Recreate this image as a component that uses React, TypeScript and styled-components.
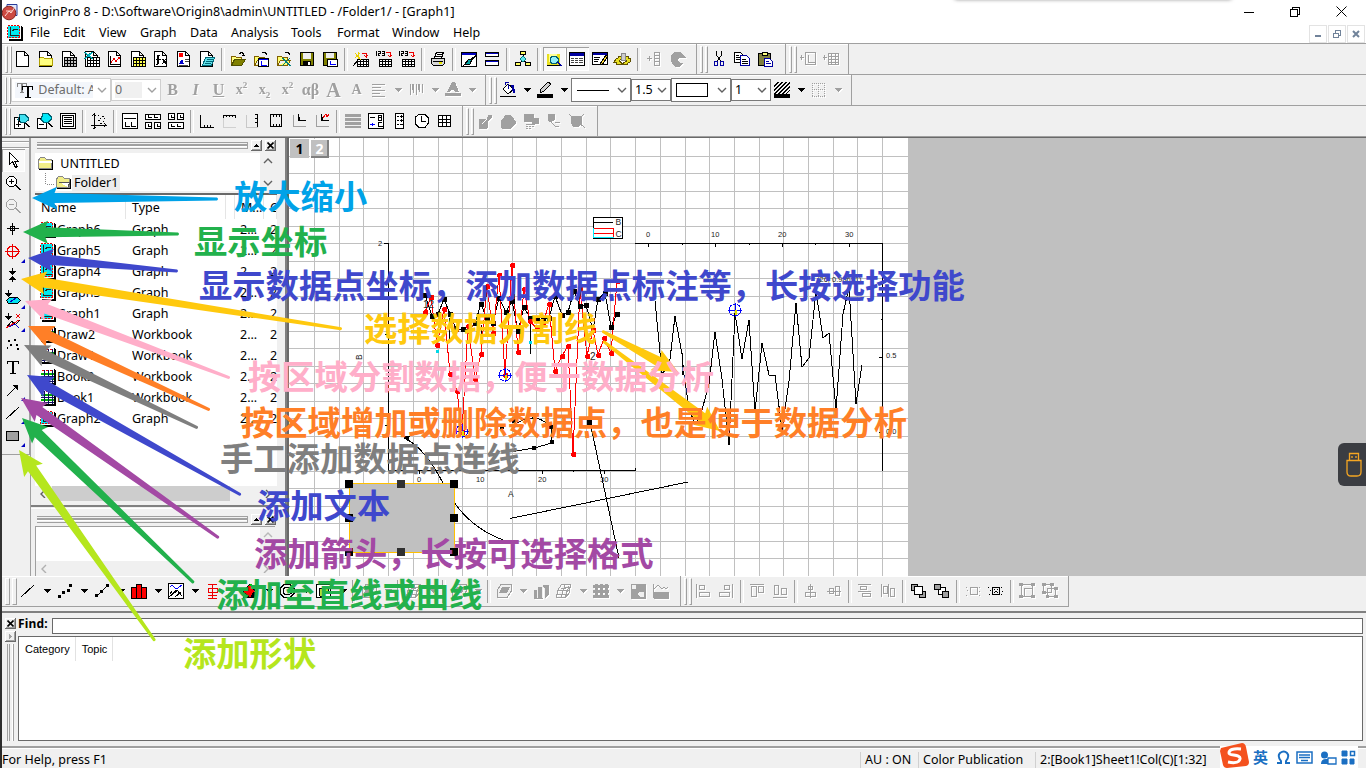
import React from 'react';
import styled, { createGlobalStyle, css } from 'styled-components';

const UI = '"Noto Sans", "Open Sans", sans-serif';

const Global = createGlobalStyle`
  body { margin: 0; background: #f0f0f0; overflow: hidden; }
  * { box-sizing: border-box; }
`;

/* ---------- frame ---------- */
const Screen = styled.div`
  position: relative; width: 1366px; height: 768px; overflow: hidden; display: flex;
  background: #f0f0f0; color: #000; font: 12.5px/16px ${UI}; white-space: pre;
`;
const DesktopEdge = styled.div`width: 2px; flex: none; background: linear-gradient(#26262b, #3c3c3c 30%, #2b2b2b);`;
const Window = styled.div`flex: 1; min-width: 0; display: flex; flex-direction: column;`;
const TitleBar = styled.div`height: 23px; flex: none; background: #fff; display: flex; align-items: center; padding-right: 2px;`;
const TitleText = styled.span`flex: 1; padding: 1px 0 0 4px; letter-spacing: 0.05px;`;
const WindowButton = styled.div`width: 46px; height: 20px; display: flex; align-items: center; justify-content: center;`;
const MenuBar = styled.div`height: 20px; flex: none; background: #fff; display: flex; align-items: center; padding-left: 5px;`;
const MenuItem = styled.span<{ $w: number }>`width: ${p => p.$w}px; flex: none;`;
const MdiButtons = styled.div`margin-left: auto; display: flex; gap: 1px; padding-right: 1px; align-self: flex-end;`;
const MdiButton = styled.div`width: 18px; height: 18px; border: 1px solid #e3e3e3; display: flex; align-items: center; justify-content: center;`;

/* ---------- toolbars ---------- */
const ToolRow = styled.div`height: 31px; flex: none; display: flex; border-top: 1px solid #a0a0a0; `;
const Bar = styled.div<{ $w: number; $closed?: boolean }>`
  width: ${p => p.$w}px; height: 30px; flex: none; display: flex; align-items: center; overflow: hidden;
  border-right: 1px solid #a0a0a0; box-shadow: inset 0 1px #fff;
  ${p => p.$closed && css`height: 31px; border-bottom: 1px solid #a0a0a0;`}
`;
const Grip = styled.div<{ $w?: number }>`
  width: ${p => p.$w ?? 10}px; height: 27px; flex: none; display: flex; gap: 2px; padding-left: 3px;
  &::before, &::after { content: ''; width: 3px; border: 1px solid; border-color: #fff #a0a0a0 #a0a0a0 #fff; }
`;
const Cell = styled.div<{ $w?: number; $off?: boolean; $on?: boolean }>`
  width: ${p => p.$w ?? 23}px; height: 24px; flex: none; display: flex; align-items: center; justify-content: center;
  ${p => p.$off && css`color: #a0a0a0; & > * { filter: drop-shadow(1px 1px 0 #fff); }`}
  ${p => p.$on && css`background: #f8f8f8; box-shadow: inset 1px 1px #a0a0a0, inset -1px -1px #fff;`}
`;
const Rule = styled.div`width: 8px; height: 23px; flex: none; display: flex; justify-content: center;
  &::before { content: ''; width: 2px; border-left: 1px solid #a0a0a0; border-right: 1px solid #fff; }`;
const Glyph = styled.span<{ $italic?: boolean; $line?: boolean; $size?: number }>`
  font: bold ${p => p.$size ?? 16}px/18px "Liberation Serif", serif;
  font-style: ${p => (p.$italic ? 'italic' : 'normal')}; text-decoration: ${p => (p.$line ? 'underline' : 'none')};
  sup, sub { font-size: 9px; line-height: 0; }
`;
const Combo = styled.div<{ $w: number; $h?: number; $off?: boolean }>`
  width: ${p => p.$w}px; height: ${p => p.$h ?? 24}px; flex: none; display: flex; align-items: center; background: #fff;
  border: 1px solid ${p => (p.$off ? '#cfcfcf' : '#7a7a7a')}; color: ${p => (p.$off ? '#6d6d6d' : '#000')};
  padding: 0 3px; justify-content: space-between;
`;
const ComboText = styled.span<{ $w: number; $tint?: string }>`
  width: ${p => p.$w}px; height: 16px; overflow: hidden; background: ${p => p.$tint ?? 'transparent'}; display: flex; align-items: center;
`;

const Svg = styled.svg`display: block; flex: none; overflow: visible; shape-rendering: crispEdges;`;
const IconSvg = styled(Svg)`margin-right: 1px;`;

type Shape = [d: string, stroke?: string, fill?: string];
const G = '#a0a0a0';
const page = 'M1.5.5h8l4 4v11h-12zM9.5.5v4h4';
const disk = 'M1.5 1.5h13v13h-13z';
const folder = 'M1.5 14.5v-9h4l1 1h5v3M1.5 14.5h10l3-5h-10z';

const icons: Record<string, Shape[]> = {
  blank: [[page, '#000', '#fff']],
  newFolder: [[page, '#000', '#fff'], ['M1.5 14.5v-7l1-1h3l1 1h8v7z', '#b0a000', '#ffff80']],
  sheet: [[page, '#000', '#fff'], ['M3.5 6.5h12v9h-12zM3 9.5h12M3 12.5h12M6.5 6v9M9.5 6v9M12.5 6v9', '#000', '#c0c0c0']],
  excel: [[page, '#000', '#fff'], ['M3.5 6.5h12v9h-12zM3 9.5h12M3 12.5h12M6.5 6v9M9.5 6v9M12.5 6v9', '#000', '#fff'], ['M0 1l8 7M8 1l-8 7', '#007878'], ['M1 1l8 7M9 1l-8 7', '#00b8c8']],
  plot: [[page, '#000', '#fff'], ['M3.5 5v8h10', '#000'], ['M4 12l3-5 2 4 3-5 1 2', '#e00']],
  matrix: [[page, '#000', '#fff'], ['M3.5 6.5h12v9h-12zM3 9.5h12M3 12.5h12M6.5 6v9M9.5 6v9M12.5 6v9', '#000', '#ffff50']],
  fn: [[page, '#000', '#fff'], ['M7 4.5h-2.5v9h-2M5.5 5v8M3 8.500h5M9 8l4 5M13 8l-4 5M10 8l4 5', '#000']],
  layout: [[page, '#000', '#fff'], ['M3 2h4v4h-4z', 'none', '#f00'], ['M3 13l3-5 2 5z', 'none', '#00c'], ['M9 8.5h4M9 10.5h4M3 14.5h9', '#444']],
  notes: [[page, '#000', '#fff'], ['M3.5 14.5l3-8h9l-3 8z', '#006878', '#60e0e8'], ['M8 8.500h6M7 10.5h6M6 12.500h6', '#006878']],
  open: [[folder, '#806000', '#ffff80'], ['M4.5 8.5h11l-4 6h-10z', '#505000', '#808000'], ['M9 3l3-2 2 3M12 4h3', '#000']],
  openT: [[folder, '#806000', '#ffff70'], ['M5.5 7.5h10v8h-10z', '#000', '#fff'], ['M6 8.5h9', '#00f'], ['M8 10v4h6', '#00f'], ['M9 2l3-1 2 3', '#000']],
  openX: [[folder, '#806000', '#ffff70'], ['M6 7l8 8M14 7l-8 8M7 7l8 8', '#008080'], ['M9 2l3-1 2 3', '#000']],
  save: [[disk, '#000', '#808000'], ['M4 2h8v6h-8z', 'none', '#eee'], ['M4 10h8v5h-8z', 'none', '#000'], ['M9 11h2v3h-2z', 'none', '#fff']],
  saveT: [[disk, '#000', '#808000'], ['M4 2h8v5h-8z', 'none', '#eee'], ['M5.5 8.5h10v7h-10z', '#000', '#fff'], ['M8 10v3.500h6', '#00f']],
  wizard: [['M4.5 8.5h11v7h-11zM4 10.5h11M4 13.500h11M7.5 9v6M10.500 9v6M13.5 9v6', '#000', '#fff'], ['M0 15l7-8', '#000'], ['M2 2l6 7M7 2l-5 5M5 1v7', '#ecd000'], ['M9 2.500h4.500v4M11 4l2 2 2-2', '#e00']],
  imp: [['M3.5 8.5h12v7h-12zM3 10.5h12M3 13.500h12M6.5 8v7M9.500 8v7M12.500 8v7', '#000', '#fff'], ['M.5 0v5M2 .5h2v2h-2v2h2M6 .5h2v4h-2M6 2.5h2', '#000'], ['M10 1.500h4.500v4M12 4l2 2 2-2', '#e00']],
  printer: [['M4.5 7l2-6h7l-2 6', '#000', '#fff'], ['M1.5 7.5h13v5l-2 2h-9l-2-2z', '#000', '#d8d8d8'], ['M3 10.5h10M7 3.5h5M6 5.5h5', '#000'], ['M9 11h3v2h-3z', 'none', '#e8e800']],
  dup: [['M.5 1.5h15v14h-15z', '#000', '#fff'], ['M1 2h14v2h-14z', 'none', '#0000c0'], ['M6 12l9-8M7 13l8-8', '#000'], ['M3 14l6-1 2-5h-3z', '#000', '#00a0a0']],
  tile: [['M1.500 1.5h13v4h-13zM1.500 9.5h13v5h-13z', '#000', '#fff'], ['M2 2h12v1h-12zM2 10h12v1h-12z', 'none', '#0000c0']],
  tree: [['M8 4v5M8 9l-4 4M8 9l5 4', '#000'], ['M5.5.5h5v3h-5zM.5 11.5h5v3h-5zM10.5 11.5h5v3h-5z', '#000', '#ffff60'], ['M8 5l3 3-3 3-3-3z', '#008080', '#60e8f0']],
  explorer: [['M1 3h13v11h-13z', 'none', '#e8e020'], ['M3 3h8v8h-8z', 'none', '#ffff90'], ['M1 14.500h14', '#000'], ['M6 5.500h4l2 2v3l-2 2h-4l-2-2v-3z', '#006070', '#90eef8'], ['M11 11l4 4M12 11l4 4', '#0000a0']],
  results: [['M.5 1.5h15v13h-15z', '#000', '#fff'], ['M1 2h14v3h-14z', 'none', '#0000a0'], ['M2 7.5h3M6 7.500h3M10 7.500h4M2 9.5h3M6 9.500h3M10 9.500h4M2 11.5h3M6 11.500h3M10 11.500h4', '#444']],
  script: [['M.5 1.5h15v12h-15z', '#000', '#fff'], ['M1 2h14v2h-14z', 'none', '#0000a0'], ['M2 6.5h6M2 8.5h5M2 10.500h4', '#000'], ['M8 13l6-9 2 1-6 9z', '#000', '#ffd830']],
  gear: [['M1 8l2-1 0-2 3 0 2-2 2 2 3 0 0 2 3 1-1 3-2 1-1 2-3-1-2 1-2-1-3 1-1-3-2 0z', '#605000', '#e8e020'], ['M5.500 8h5l1 2-3 2h-2l-2-2z', '#605000', '#fff'], ['M6 2h4v7h-4z', '#888', '#ccc']],
  addCol: [['M1 7.5h5M3.5 5v5M8.5 1.5h5v13h-5zM8 4.5h5M8 7.5h5M8 10.5h5', G]],
  cshape: [['M14 4l-3-3h-5l-4 4v5l4 5h5l3-3h-3l-3-3 3-3h5z', G, G]],
  cut: [['M5.500 0v4l4 6M10.500 0v4l-4 6', '#000'], ['M3.500 10.500h3v4h-3zM9.500 10.500h3v4h-3z', '#0000a0']],
  copy: [['M.5 1.5h6l3 3v7h-9z', '#000', '#fff'], ['M6.5 4.5h6l3 3v7h-9z', '#0000a0', '#fff'], ['M2 4.5h3M2 6.5h4M2 8.500h4M8 8.5h4M8 10.5h6M8 12.500h6', '#000']],
  paste: [['M1.5 2.5h12v12h-12z', '#000', '#808040'], ['M5 1.500h5v3h-5z', '#000', '#ffff80'], ['M7.5 7.5h5l3 3v5h-8z', '#0000a0', '#fff'], ['M9 10.5h3M9 12.5h5', '#0000a0']],
  addBox: [['M0 6.5h4M1.500 4v5M5.5 1.5h10v12h-10zM8.500 4v7h7', G]],
  addGrid: [['M0 6.5h4M1.500 4v5M5.5 2.5h10v11h-10zM5 5.5h10M5 8.5h10M5 11.5h10M8.5 2v11M12.5 2v11', G]],
  bucket: [['M3 7l5-5 6 5-6 5z', '#000', '#fff'], ['M8.500 2v5M5.500 3V.500h3', '#0000a0'], ['M11 3h3l1 8h-2z', 'none', '#0000a0'], ['M0 14.500h16', '#000']],
  pen: [['M3 10l1-3 7-7 3 2-7 7-4 2z', '#000', '#d0d0d0'], ['M0 12h16v4h-16z', 'none', '#000']],
  hatch: [['M0 4l4-4M0 8l8-8M0 12l12-12M4 12l12-12M8 12l8-8M12 12l4-4M0 5l5-5M0 9l9-9M1 12l12-12M5 12l11-11M9 12l7-7', '#000'], ['M0 12h16v4h-16z', 'none', '#000']],
  left: [['M1 2.5h13M1 5.5h9M1 8.5h13M1 11.5h8M1 14.5h13', G]],
  spread: [['M2.5 2v11M5.5 2v9M8.5 2v11M11.5 2v8M14.5 2v9M4.500 2v6M10.500 2v6', G]],
  colorA: [['M2 10l5-10h3l4 10h-4l-1-2h-3l-1 2z', 'none', G], ['M0 11h16v3h-16z', 'none', G]],
  zoomIn: [['M.5 4.5h10v11h-10z', '#000', '#fff'], ['M6 1.500h5l3 3v3l-3 2h-4l-3-3z', '#006070', '#40e0f0'], ['M11 10l4 4M12 10l4 4M4.500 8v6M2 11.5h5M5.500 4v5', '#000']],
  zoomOut: [['M.5 5.5h9v10h-9z', '#000', '#fff'], ['M6 .500h5l3 3v3l-3 3h-4l-3-3z', '#006070', '#00e8f8'], ['M11 10l4 4M12 10l4 4M2 11.5h5', '#000']],
  pageView: [['M.5.5h15v15h-15zM2.5 2.5h11v11h-11z', '#000', '#fff'], ['M4 4.5h8M4 6.5h8M4 8.5h8M4 10.5h8', '#000']],
  rescale: [['M3.5 0v16M0 12.5h16M1 3l2-2 2 2M13 10l2 2-2 2', '#000'], ['M7 2.500h1M11 3.500h2M9 5.500h1M13 5.500h1M7 7.500h2M12 8.500h1M9 10.500h2M5 14l-3 2', '#000']],
  panel1: [['M.5.5h15v15h-15z', '#000', '#fff'], ['M2 5.5h12M3.500 9v4h4M9.500 9v4h4', '#000']],
  panel4: [['M.5 1.5h15v5h-15zM.5 9.5h6v6h-6zM9.5 9.5h6v6h-6z', '#000', '#fff'], ['M3.500 2v2.500h3M9.500 2v2.500h3M3.500 11v2.500h2M12.500 11v2.500h2', '#000']],
  panel6: [['M.5.5h6v6h-6zM9.5.5h6v6h-6zM.5 9.5h15v6h-15z', '#000', '#fff'], ['M3.500 2v2.500h2M12.500 2v2.500h2M3.500 11v2.500h3M9.500 11v2.500h3', '#000']],
  axL: [['M1.5 2v12.500h13', '#000'], ['M5.500 12v2M8.500 12v2M11.500 12v2', '#000']],
  axT: [['M1 2.5h13M1.500 2v3M4.500 2v2M7.500 2v2M10.500 2v2M13.500 2v3', '#000'], ['M1.5 5v9.500h12', '#d0d0d0']],
  axR: [['M12.5 1v13M10 1.500h3M10 5.500h3M10 9.500h3', '#000'], ['M1.500 2v12.5h11', '#c8c8c8']],
  axB: [['M2.5 1.5h11v12h-11z', '#000'], ['M5.500 2v2M8.500 2v2M11.500 2v2M5.500 11v2M8.500 11v2M11.500 11v2', '#000']],
  inset: [['M2.5 2v11.500h12', G], ['M7.5 1v6h7M8.500 4v3', '#000']],
  insetR: [['M2.5 2v11.500h12', G], ['M7.5 1v6h7M8.500 4v3', '#000'], ['M9 5l3-4 1 3 2-3', '#e00']],
  bars3: [['M0 1h16v3h-16zM0 5h16v3h-16zM0 9h16v3h-16zM0 13h16v2h-16z', 'none', G]],
  legend: [['M.5.5h15v15h-15z', '#000', '#fff'], ['M2 4.5h5M10.500 2v5h3v-5h-3M10 4.5h3M14 9.5h-3.500v4h4', '#000'], ['M2 11.5h5M4.5 10v3', '#00f']],
  colorScale: [['M4.5.5h8v15h-8z', '#000', '#fff'], ['M6 3.500h2M6 7.500h2M6 11.500h2M10.500 2v3M9 3.500h3M10.500 6v3M9 7.500h3M9 11.500h3', '#000']],
  clock: [['M5 1.5h6l3 3v6l-3 4h-6l-4-4v-6z', '#000', '#fff'], ['M7.500 3v5.500h4', '#000']],
  table: [['M1.5 2.5h12v11h-12zM1 6.5h12M1 9.5h12M5.5 2v11M9.5 2v11', '#000', '#fff']],
  m1: [['M2 6h8l2-4h2v3l-3 3-1 7h-8z', G, G], ['M5 11l5-5', '#fff']],
  m2: [['M1 9l5-7h4l5 6v3l-4 4h-9z', G, G]],
  m3: [['M1 1h9v7h-9zM9 5h6v5h-6z', G, G], ['M3 11.500h9M3 13.500h2M6 13.500h2M9 13.500h2M3 15.500h2M6 15.500h2', G]],
  m4: [['M3 1h5v6l-2 1h-3l-1-2zM5 9l5 5', G, G], ['M9 9.500h5M9 13.500h4', G]],
  m5: [['M3 3h9v8l-2 2h-6l-2-4zM0 1l16 14M15 1l-6 6', G, G]],
  arrow: [['M4.5.5v12l3-3 3 6 2-1-3-5h4z', '#000', '#fff']],
  magPlus: [['M4.500 1.5h4l3 3v4l-3 3h-4l-3-3v-4z', '#000', '#fff'], ['M6.500 4v5M4 6.5h5M10 10l5 5M11 10l5 5', '#000']],
  magMinus: [['M4.500 1.5h4l3 3v4l-3 3h-4l-3-3v-4zM4 6.5h5M10 10l5 5M11 10l5 5', G]],
  cross: [['M7.5 2v12M2 7.5h12M5.5 5.5h4v4h-4z', '#000']],
  target: [['M5 2.500h5l3 3v4l-3 3h-5l-3-3v-4zM7.5 0v15M0 7.5h15', '#e00']],
  range: [['M7.500 1v4M7.500 15v-4', '#000'], ['M4 4h7l-3.500 4zM4 13h7l-3.500-4z', 'none', '#000']],
  region: [['M3.500 0v4', '#000'], ['M0 3h7l-3.500 4z', 'none', '#000'], ['M1.5 10.5l3-3h8l3 3-3 3h-9z', '#000', '#00e0f0'], ['M5 12l6-4', '#0000c0']],
  mask: [['M3.500 0v4M1 15l6-7 3 4 5-5', '#000'], ['M0 3h7l-3.500 4z', 'none', '#000'], ['M11 1l4 4M15 1l-4 4M1 15l13-8', '#e00'], ['M4 14l6-3 4 4', '#00c']],
  dots: [['M3 4h2v2h-2zM9 3h2v2h-2zM5 8h2v2h-2zM11 8h2v2h-2zM2 11h1v2h-1zM12 12h2v2h-2z', 'none', '#000']],
  bigT: [['M2.5 5v-2.500h11v2.500M8.500 2v12M7.500 2v12M5 14.5h6', '#000']],
  diag: [['M2 14l9-9', '#000'], ['M7 3h6v6z', 'none', '#000']],
  line: [['M1 14l13-12', '#000']],
  rect: [['M1.5 3.5h12v9h-12z', '#000', G]],
  scat: [['M1 12h3v3h-3zM5 8h3v3h-3zM10 6h3v3h-3zM12 1h3v3h-3z', 'none', '#000']],
  lscat: [['M3 13l11-11', '#000'], ['M1 11h3v3h-3zM6 7h3v3h-3zM12 1h3v3h-3z', 'none', '#000']],
  hist: [['M.5 15.5v-11h5v11zM5.5 15.5v-14h5v14zM10.5 15.5v-11h5v11z', '#000', '#f00']],
  area: [['M.5.5h15v15h-15z', '#000', '#fff'], ['M1 14l6-6 2-1 5 6M2 11l2-3M7 14l6-5M1 14l8-6', '#000'], ['M2 4l2-2 3 3 3 0 4-3', '#00f']],
  box: [['M3 1.5h9M7.5 1v14M3 5.5h9v4h-9zM3 12.5h9M3 15.5h9', '#e00']],
  surf: [['M8 1l6 8-6 6-7-6z', '#000', '#f00'], ['M1 9l4 3 3 3h-7zM11 9h4v6h-7z', 'none', '#000'], ['M6 3l3-3 3 4z', 'none', '#0c0']],
  polar: [['M5 1.5h6l4 4v5l-4 4h-6l-4-4v-5zM6 4.5h4l2 2v4l-2 1h-4l-2-2v-3z', '#000']],
  contour: [['M.5 1.5h14v13h-14z', '#000', '#fff'], ['M3 5h9v3l-5 5h-3z', '#000', '#b0e030']],
  slab: [['M5 1.5h10v7l-4 6h-10v-7z', G, '#f0f0f0'], ['M6 4h8l-3 6h-8z', 'none', G]],
  bars3d: [['M1 7h3v8h-3zM5 4h4v11h-4zM10 2h5v10l-3 3v-10z', G, G], ['M4.500 6v9M9.500 4v11', '#f0f0f0']],
  wire: [['M5.5 1.5h9l-1 8-4 5h-9l1-7zM2 7h11M1 11h11M9 2l-4 12M13 3l-4 11M5 6l9-2', G]],
  mesh: [['M2 1h3v14h-3zM7 1h3v14h-3zM12 1h3v14h-3zM0 2h16v3h-16zM0 7h16v3h-16zM0 12h16v3h-16z', 'none', G]],
  image: [['M1 1h14v14h-14z', G, G], ['M2 2h4v4h-4zM10 9h4v5h-3l-4-3z', 'none', '#f0f0f0']],
  profile: [['M1 9h14v6h-14z', G, G], ['M1 6l4-4 4 4 2-2 2 2 2-2M.5 1v14', G]],
  alL: [['M1.5 1v14M4.5 2.5h5v4h-5zM4.5 9.5h10v4h-10z', G]],
  alR: [['M14.5 1v14M6.5 2.5h5v4h-5zM1.5 9.5h10v4h-10z', G]],
  alT: [['M1 1.5h14M2.5 3.5h5v10h-5zM9.5 3.5h5v6h-5z', G]],
  alB: [['M1 14.5h14M2.5 2.5h4v9h-4zM9.5 5.5h5v6h-5z', G]],
  alH: [['M7.500 1v14M5.5 3.5h4v3h-4zM2.5 9.5h10v4h-10z', G]],
  alV: [['M1 8.500h14M3.5 5.5h4v5h-4zM9.5 3.5h4v9h-4z', G]],
  dV: [['M1 1.5h13M3.5 3.5h6v3h-6zM5.5 10.5h8v3h-8zM1 8.5h13', G]],
  dH: [['M1.5 1v13M8.5 1v13M3.5 3.5h4v7h-4zM10.5 5.5h4v8h-4z', G]],
  front: [['M.5 1.5h6v6h-6zM8.5 8.5h6v6h-6z', '#000', G], ['M3.5 3.5h8v8h-8z', '#000', '#fff']],
  back: [['M4.5 4.5h7v7h-7z', '#000', '#fff'], ['M.5 1.500h6v5h-6zM8.5 8.5h6v6h-6z', '#000', G]],
  fit: [['M5.5 4.5h7v7h-7zM1 4.500h1M2 7.500h1M1 12.500h1M14 4.500h1M14 8.500h1M14 12.500h1', G]],
  fitB: [['M4.5 4.5h7v7h-7zM0 4.500h1M2 7.500h1M1 11.500h1M13 4.500h1M14 8.500h1M13 11.500h1M6 6.500h1M9 6.500h1M7 8.500h2M6 9.500h1M9 9.500h1', '#000']],
  group: [['M2.5 1.5h11v12h-11zM5.5 5.5h8v8h-8z', G], ['M0 0h4v3h-4zM12 0h4v3h-4zM0 12h4v3h-4zM12 12h4v3h-4z', 'none', G]],
  ungroup: [['M1.5 1.5h8v8h-8zM5.5 5.5h8v8h-8z', G], ['M0 0h4v3h-4zM8 0h4v3h-4zM0 8h4v3h-4zM12 4h4v3h-4zM12 12h4v3h-4zM4 12h3v3h-3z', 'none', G]],
  borders: [['M1.500 1v14M13.500 1v14M1 1.500h13M1 14.500h13M7.500 1v14M1 7.500h13', G]],
  tt: [['M.5 5v-3.500h9v3.500M4.500 1v10M5.500 1v10M3 10.500h4', '#888'], ['M5.500 8v-3.500h10v3.500M10.500 4v11M11.500 4v11M8 15.500h6', '#000']],
};

function Icon({ name }: { name: string }) {
  return (
    <IconSvg width={16} height={16} viewBox="0 0 16 16" strokeDasharray={name === 'borders' ? '1 1' : undefined}>
      {(icons[name] ?? []).map(([d, s = '#000', f = 'none'], i) => <path key={i} d={d} stroke={s} fill={f} />)}
    </IconSvg>
  );
}
const Drop = ({ off }: { off?: boolean }) => (
  <Cell $w={14} $off={off}><Svg width="8" height="4"><path d="M0 0h8l-4 4z" fill={off ? G : '#000'} /></Svg></Cell>
);
const Chevron = ({ dir = 'down', c = '#606060' }: { dir?: string; c?: string }) => {
  const d: Record<string, string> = { down: 'M1 2l4 4 4-4', up: 'M1 7l4-4 4 4', left: 'M6 1l-4 4 4 4', right: 'M3 1l4 4-4 4' };
  return <svg width="10" height="9" viewBox="0 0 10 9"><path d={d[dir]} fill="none" stroke={c} strokeWidth="1.4" /></svg>;
};

/* Renders a compact toolbar spec: "|" is a rule, "v" a menu arrow, "~" marks a disabled icon, "!" a pressed one. */
function Tools({ spec }: { spec: string }) {
  return <>{spec.split(' ').map((t, i) => {
    if (t === '|') return <Rule key={i} />;
    if (t === 'v' || t === '~v') return <Drop key={i} off={t === '~v'} />;
    const off = t[0] === '~', on = t[0] === '!';
    return <Cell key={i} $off={off} $on={on}><Icon name={off || on ? t.slice(1) : t} /></Cell>;
  })}</>;
}

/* ---------- workspace ---------- */
const Workspace = styled.div`height: 440px; flex: none; display: flex; border-top: 1px solid #a0a0a0; box-shadow: inset 0 1px #696969; padding-top: 1px;`;
const Toolbox = styled.div`
  width: 28px; height: 317px; flex: none; display: flex; flex-direction: column; border-right: 1px solid #a0a0a0; border-bottom: 1px solid #a0a0a0;
  padding-top: 3px;
`;
const HGrip = styled.div`height: 7px; flex: none; margin-bottom: 1px; border: solid #a0a0a0; border-width: 1px 0; box-shadow: 0 1px #fff, inset 0 1px #fff;`;
const ToolSlot = styled.div<{ $on?: boolean }>`
  height: 23px; width: 23px; padding-bottom: 1px; flex: none; display: flex; align-items: center; justify-content: center; position: relative;
  ${p => p.$on && css`background: #fafafa; box-shadow: inset 1px 1px #a0a0a0, inset -1px -1px #fff;`}
`;
const Flyout = styled.i`position: absolute; right: 0; bottom: 1px; border: 2px solid; border-color: transparent #0000c0 #0000c0 transparent;`;
const Side = styled.div`width: 257px; flex: none; display: flex; flex-direction: column; border-left: 1px solid #a0a0a0; padding: 1px 2px 0 4px; border-right: 2px solid #808080; `;
const Caption = styled.div`height: 13px; flex: none; display: flex; align-items: center; gap: 3px; padding-left: 2px;`;
const CaptionLines = styled.div`flex: 1; height: 7px; max-width: 211px; border: solid #a0a0a0; border-width: 1px 1px 1px 0; display: flex; align-items: center;
  &::before { content: ''; width: 100%; height: 2px; background: #a0a0a0; border-bottom: 1px solid #fff; }`;
const TinyButton = styled.div`
  width: 11px; height: 11px; flex: none; display: flex; align-items: center; justify-content: center; background: #f0f0f0;
  box-shadow: inset -1px -1px #696969, inset 1px 1px #fff, inset -2px -2px #a0a0a0;
`;
const Tree = styled.div`width: 240px; height: 38px; flex: none; background: #fff; margin-top: 1px; display: flex; justify-content: space-between; `;
const TreeItems = styled.div`padding-left: 3px; display: flex; flex-direction: column;`;
const TreeItem = styled.div<{ $in?: number }>`height: 20px; padding-left: ${p => p.$in ?? 0}px; display: flex; align-items: center; gap: ${p => (p.$in ? 2 : 4)}px; padding-top: 2px;`;
const Selected = styled.span`background: #ececec; padding: 0 2px; margin-left: -1px;`;
const VScroll = styled.div`width: 15px; background: #f0f0f0; display: flex; flex-direction: column; align-items: center; justify-content: space-between; padding: 3px 0;`;
const List = styled.div`
  width: 242px; height: 308px; flex: none; margin-top: 2px; background: #fff; border-top: 2px solid #696969; display: flex; flex-direction: column;
`;
const ListHead = styled.div`height: 24px; display: flex; align-items: center; span { height: 24px; line-height: 25px; border-right: 1px solid #e5e5e5; padding-left: 6px; overflow: hidden; }`;
const ListRow = styled.div`height: 21px; display: flex; align-items: center; padding-left: 5px;`;
const Col = styled.span<{ $w: number }>`width: ${p => p.$w}px; flex: none; overflow: hidden;`;
const RowIcon = styled.span`width: 17px; flex: none;`;
const HScroll = styled.div`height: 15px; margin-top: auto; background: #f0f0f0; display: flex; align-items: center; justify-content: space-between; padding: 0 4px;`;
const Thumb = styled.div`width: 178px; height: 15px; background: #cdcdcd; margin-right: auto; margin-left: 3px;`;
const SideSplit = styled.div`height: 4px; flex: none; margin: 4px -2px 4px -4px; border-top: 2px solid #808080; border-bottom: 1px solid #fff;`;
const Memo = styled.div`flex: 1; margin-right: 8px; background: #fff; border: solid #a0a0a0; border-width: 1px 0 0 1px; display: flex; flex-direction: column;`;
const MemoScroll = styled(VScroll)`align-self: flex-end; height: 31px;`;
const GraphArea = styled.div`flex: 1; background: #c0c0c0; border-left: 2px solid #696969;`;
const Canvas = styled.div`width: 619px; height: 438px; background: #fff; position: relative;`;
const LayerTabs = styled.div`position: absolute; left: 1px; top: 1px; display: flex; gap: 1px; font-weight: bold; font-size: 14px;`;
const LayerTab = styled.div<{ $dim?: boolean }>`
  width: 19px; height: 19px; background: #c0c0c0; text-align: center; line-height: 19px; color: ${p => (p.$dim ? '#fff' : '#000')};
  ${p => p.$dim && css`box-shadow: inset 1px 1px #fff, inset -2px -2px #808080;`}
`;

const listing: [string, string][] = [
  ['Graph6', 'Graph'], ['Graph5', 'Graph'], ['Graph4', 'Graph'], ['Graph3', 'Graph'], ['Graph1', 'Graph'],
  ['Draw2', 'Workbook'], ['Draw1', 'Workbook'], ['Book2', 'Workbook'], ['Book1', 'Workbook'], ['Graph2', 'Graph'],
];
const GraphIcon = () => (
  <Svg width="16" height="16" viewBox="0 0 16 16">
    <path d="M2 14.500h12.500v-13.500M2 15.500h13.500v-14" stroke="#000" fill="none" />
    <path d="M.5.5h12v12h-12z" fill="#00e8f0" stroke="#e00" strokeDasharray="2 1" />
    <path d="M3.500 2v8.500h8M5 6l3-2 3 1" stroke="#222" fill="none" />
  </Svg>
);
const BookIcon = () => (
  <Svg width="16" height="16" viewBox="0 0 16 16">
    <path d="M0 0h14v14h-14z" fill="#fff" /><path d="M1 5h13M1 10h13" stroke="#00b000" strokeWidth="2" />
    <path d="M4.500 1v13M8.500 1v13M12.500 1v13M1 7.500h13M1 12.500h13" stroke="#101060" /><path d="M2 1.500h2M6 1.500h2M10 1.500h2" stroke="#e00" />
    <path d="M14.500 0v14.500H1M15.500 1v14.500H2" stroke="#000" fill="none" />
  </Svg>
);
const FolderIcon = ({ open }: { open?: boolean }) => (
  <Svg width="15" height="13" viewBox="0 0 15 13">
    <path d="M.5 11.500V3l2-2.500h4l2 2h5v9z" fill="#f2ee88" stroke="#888" /><path d="M14.500 3v9.500H1" stroke="#000" fill="none" />
    <path d={open ? 'M3 6h11l-2 5' : 'M1 4h12v1H1z'} stroke={open ? '#555' : '#fff'} fill="#fff" />
  </Svg>
);

/* ---------- chart ---------- */
const blackPts: number[][] = [[425, 295], [432, 316], [438, 314], [444, 299], [450, 314], [456, 329], [463, 329], [469, 330], [475, 323], [481, 304], [487, 319], [493, 323], [499, 298], [506, 312], [512, 301], [518, 331], [524, 307], [530, 318], [537, 319], [543, 319], [549, 318], [555, 296], [562, 315], [568, 312], [574, 291], [580, 306], [586, 305], [593, 330], [598, 299], [605, 293], [611, 327], [617, 314]];
const redPts: number[][] = [[425, 312], [431, 297], [437, 345], [444, 309], [450, 374], [457, 391], [462, 432], [468, 326], [475, 379], [481, 354], [487, 286], [493, 333], [499, 275], [505, 375], [512, 265], [518, 352], [524, 289], [530, 321], [537, 329], [543, 323], [549, 304], [555, 371], [562, 356], [568, 346], [573, 454], [580, 289], [587, 356], [593, 330], [598, 355], [604, 338], [611, 353], [617, 281]];
const rightPts = '655,301 662,373 669,368 675,316 682,354 684,375 689,408 695,425 702,410 709,384 715,332 722,379 729,445 735,313 742,359 749,320 755,412 762,343 769,375 775,375 782,430 789,381 796,303 802,367 809,358 816,291 823,338 829,333 836,410 843,314 849,287 856,404 862,365';

const Chart = () => (
  <Svg width="619" height="438" viewBox="289 138 619 438" fontFamily='"Liberation Sans", sans-serif' fontSize="7.500" fill="#222">
    <g stroke="#c0c0c0">
      {Array.from({ length: 24 }, (_, i) => <path key={'v' + i} d={`M${Math.round(314 + i * 24.7)}.5 138v438`} />)}
      {Array.from({ length: 24 }, (_, i) => <path key={'h' + i} d={`M289 ${Math.round(156 + i * 17.480)}.5h619`} />)}
    </g>
    <g stroke="#000" fill="none">
      <path d="M384 243.500h4.500v227h247v-3M419.500 470v4M450.500 470v2M481.500 470v4M511.500 470v2M542.500 470v4M573.500 470v2M604.500 470v4M385 334.500h4M385 425.500h4" />
      <path d="M635 243.500h247.500v227M648.500 243v4M682.500 243v2M715.500 243v4M749.500 243v2M782.500 243v4M815.500 243v2M849.500 243v4M879 357.500h4M881 319.500h2M879 432.500h4" />
      <polyline points={blackPts.map(p => p.join()).join(' ')} />
      <polyline points={rightPts} />
      <path d="M404 438Q425 447 445 487T506 541M510 518.500L688 482M590 422L619 558M511 427Q534 409 551 427L552 443 534 448 510 452" />
      <path d="M530 318v36M481 325v18M449 318v25M682 353v22" />
    </g>
    <polyline points={redPts.map(p => p.join()).join(' ')} stroke="#f00" fill="none" />
    {blackPts.map(([x, y]) => <path key={x} d={`M${x - 2} ${y - 2}h5v5h-5z`} fill="#000" />)}
    {redPts.map(([x, y]) => <path key={x} d={`M${x - 1} ${y - 2}h3l1 1v3l-1 1h-3l-1-1v-3z`} fill="#f00" />)}
    <path d="M549 425h4v4h-4zM550 440h4v4h-4zM532 446h4v4h-4zM500 425h4v4h-4zM402 436l8 0-2 6zM587 420h5v5h-5zM512 419h4v4h-4z" fill="#000" />
    <g stroke="#00f" fill="none">
      {[[505, 375], [462, 431], [735, 310]].map(([x, y]) => (
        <g key={x}><circle cx={x} cy={y} r="6" strokeDasharray="4 1" /><path d={`M${x - 7} ${y + .5}h14M${x}.5 ${y - 7}v14`} /><path d={`M${x}.5 ${y}v5`} stroke="#dd0" strokeWidth="2" /></g>
      ))}
    </g>
    <path d="M436 350h3v3h-3zM529 341h3v3h-3zM587 370h3v3h-3z" fill="#00d8e8" />
    <path d="M593.500 217.500h29v21h-29z" fill="#fff" stroke="#000" />
    <path d="M594 222.500h19" stroke="#000" /><path d="M594 228.500h19.500v9M594 233.500h19" stroke="#f00" fill="none" /><path d="M593.500 228v9.500h20" stroke="#0ef" fill="none" />
    <g fontSize="8.500"><text x="615.500" y="225">B</text><text x="615.500" y="236.500">C</text></g>
    <text x="378" y="246">2</text><text x="417" y="482">0</text><text x="476" y="482">10</text><text x="538" y="482">20</text><text x="600" y="482">30</text>
    <text x="646" y="237">0</text><text x="711" y="237">10</text><text x="778" y="237">20</text><text x="845" y="237">30</text>
    <text x="886" y="358">0.5</text><text x="886" y="434">0.0</text><text x="817" y="282">(26, 0.98691)</text><text x="508" y="497" fontSize="8.500">A</text>
    <text x="362" y="360" fontSize="8.500" transform="rotate(-90 362 360)">B</text>
    <text x="423" y="308" fontSize="10">12</text><text x="590" y="360" fontSize="10">2</text>
    <path d="M349 483.500h105v69h-105z" fill="#c0c0c0" stroke="#ffc000" />
    {[349, 401, 454].map(x => [484, 518, 552].map(y => !(x === 401 && y === 518) && <path key={x + '-' + y} d={`M${x - 4} ${y - 4}h8v8h-8z`} fill={x === 401 ? '#303030' : '#000'} />))}
  </Svg>
);

/* ---------- footer ---------- */
const BottomTools = styled.div`height: 35px; flex: none; display: flex; align-items: flex-start;`;
const FindPane = styled.div`height: 137px; flex: none; border-top: 2px solid #808080; border-bottom: 2px solid #a0a0a0; display: flex; padding: 5px 3px 5px 3px; gap: 2px;`;
const PaneEdge = styled.div`width: 11px; flex: none; display: flex; flex-direction: column; gap: 2px;`;
const VGrip = styled.div`flex: 1; margin-left: 2px; width: 7px; border: solid #a0a0a0; border-width: 0 1px; display: flex; justify-content: center; &::before { content: ''; width: 2px; border-left: 1px solid #a0a0a0; border-right: 1px solid #fff; }`;
const FindBody = styled.div`flex: 1; display: flex; flex-direction: column; gap: 3px;`;
const FindLine = styled.div`display: flex; align-items: center; height: 15px; font-weight: bold; font-size: 12px; letter-spacing: 0.2px; span { width: 34px; padding-bottom: 3px; }`;
const FindInput = styled.div`flex: 1; height: 16px; background: #fff; border: 1px solid #696969;`;
const Results = styled.div`flex: 1; background: #fff; border: 1px solid #696969; display: flex; font: 11px/24px "Liberation Sans", sans-serif; span { height: 24px; border-right: 1px solid #e2e2e2; padding: 0 5px 0 6px; }`;
const Status = styled.div`flex: 1; display: flex; align-items: center; border-top: 1px solid #fff; padding-top: 3px;`;
const StatusPart = styled.span<{ $w?: number }>`${p => (p.$w ? `width: ${p.$w}px;` : 'flex: 1;')} border-left: ${p => (p.$w ? '1px solid #d0d0d0' : 'none')}; padding-left: ${p => (p.$w ? 4 : 0)}px;`;
const ImeBar = styled.div`position: absolute; left: 1220px; top: 743px; width: 138px; height: 25px; display: flex; align-items: center; background: linear-gradient(transparent 3px, #fff 3px); color: #1b6fc2; font: bold 15px/20px "Noto Sans CJK SC", sans-serif;`;
const Shade = styled.div`position: absolute; left: 955px; top: -7px; width: 276px; height: 6px; box-shadow: 0 0 4px rgba(0,0,0,.6);`;
const UsbTab = styled.div`position: absolute; left: 1338px; top: 443px; width: 34px; height: 43px; border-radius: 6px; background: #3b3d42; display: flex; align-items: center; padding-left: 8px;`;

/* ---------- annotations ---------- */
const Notes = styled.svg`position: absolute; left: 0; top: 0;`;
const Note = styled.span<{ $x: number; $y: number; $c: string }>`
  position: absolute; left: ${p => p.$x}px; top: ${p => p.$y - 22}px; color: ${p => p.$c};
  font: bold 33.300px/40px "Noto Sans CJK SC", sans-serif;
`;
const arrows: [number, number, number, number, string][] = [
  [32, 198, 218, 199, '#00a2e8'], [23, 232, 179, 234, '#22b14c'], [28, 258, 178, 271, '#3f48cc'], [21, 279, 342, 329, '#ffc90e'],
  [25, 301, 230, 378, '#ffaec9'], [28, 326, 210, 410, '#ff7f27'], [24, 345, 198, 428, '#7f7f7f'], [27, 375, 241, 495, '#3f48cc'],
  [21, 398, 219, 538, '#a349a4'], [22, 418, 194, 583, '#22b14c'], [19, 450, 155, 641, '#b5e61d'],
  [678, 372, 602, 331, '#ffc90e'], [720, 431, 603, 341, '#ffc90e'],
];
const notes: [string, number, number, string][] = [
  ['放大缩小', 234, 197, '#00a2e8'], ['显示坐标', 194, 242, '#22b14c'], ['显示数据点坐标，添加数据点标注等，长按选择功能', 199, 286, '#3f48cc'],
  ['选择数据分割线', 364, 329, '#ffc90e'], ['按区域分割数据，便于数据分析', 248, 377, '#ffaec9'], ['按区域增加或删除数据点，也是便于数据分析', 241, 423, '#ff7f27'],
  ['手工添加数据点连线', 220, 459, '#7f7f7f'], ['添加文本', 257, 506, '#3f48cc'], ['添加箭头，长按可选择格式', 254, 554, '#a349a4'],
  ['添加至直线或曲线', 216, 595, '#22b14c'], ['添加形状', 183, 654, '#b5e61d'],
];
function Taper({ a: [hx, hy, tx, ty, c] }: { a: [number, number, number, number, string] }) {
  const len = Math.hypot(tx - hx, ty - hy);
  const angle = (Math.atan2(ty - hy, tx - hx) * 180) / Math.PI;
  return <path fill={c} transform={`translate(${hx} ${hy}) rotate(${angle})`}
    d={`M0 0L25 -11.500 22.500 -5 ${len - 1} -1.500Q${len + 1} 0 ${len - 1} 1.500L22.500 5 25 11.500Z`} />;
}

const MENU: [string, number][] = [['File', 33], ['Edit', 36], ['View', 41], ['Graph', 50], ['Data', 41], ['Analysis', 60], ['Tools', 46], ['Format', 55], ['Window', 61], ['Help', 40]];
const toolbox = 'arrow magPlus magMinus cross target range region mask dots bigT diag line rect'.split(' ');
const flyouts = new Set(['target', 'region', 'mask', 'diag', 'line', 'rect']);
const UpMark = () => <Svg width="5" height="3"><path d="M0 3h5l-2.500-3z" fill="#000" /></Svg>;
const CloseMark = () => <svg width="7" height="7"><path d="M.5.5l6 6M6.500.5l-6 6" stroke="#000" strokeWidth="1.600" /></svg>;

function SideCaption() {
  return <Caption><CaptionLines /><TinyButton><UpMark /></TinyButton><TinyButton><CloseMark /></TinyButton></Caption>;
}

export default function App() {
  return (
    <Screen>
      <Global />
      <DesktopEdge />
      <Window>
        <TitleBar>
          <svg width="17" height="18" viewBox="0 0 17 18"><path d="M5 1.500h10v11H5z" fill="#dfe8ff" stroke="#283c98" /><circle cx="7" cy="10" r="6.800" fill="#cc4a42" stroke="#8c2520" /><path d="M3 13l4-5 2 2 4-6M4 8h6" stroke="#ffd8d0" fill="none" /></svg>
          <TitleText>OriginPro 8 - D:\Software\Origin8\admin\UNTITLED - /Folder1/ - [Graph1]</TitleText>
          <WindowButton><Svg width="10" height="10"><path d="M0 5.500h10" stroke="#000" /></Svg></WindowButton>
          <WindowButton><Svg width="10" height="10"><path d="M.5 2.500h7v7h-7zM2.500 2V.5h7v7H8" stroke="#000" fill="none" /></Svg></WindowButton>
          <WindowButton><svg width="11" height="11"><path d="M.5.5l10 10M10.500.5l-10 10" stroke="#000" /></svg></WindowButton>
        </TitleBar>
        <MenuBar>
          <MenuItem $w={23}><GraphIcon /></MenuItem>
          {MENU.map(([m, w]) => <MenuItem key={m} $w={w}>{m}</MenuItem>)}
          <MdiButtons>
            <MdiButton><Svg width="8" height="8"><path d="M1 6h6" stroke="#71839a" strokeWidth="2" /></Svg></MdiButton>
            <MdiButton><Svg width="8" height="8"><path d="M.5 3.500h5v4h-5zM2.500 3V.5h5v5H6" stroke="#71839a" fill="none" /></Svg></MdiButton>
            <MdiButton><svg width="8" height="8"><path d="M1 1l6 6M7 1l-6 6" stroke="#71839a" strokeWidth="2" /></svg></MdiButton>
          </MdiButtons>
        </MenuBar>
        <ToolRow>
          <Bar $w={695}><Grip /><Tools spec="blank newFolder sheet excel plot matrix fn layout notes | open openT openX save saveT | wizard imp imp | printer | dup tile | tree | !explorer !results script gear | ~addCol ~cshape" /></Bar>
          <Bar $w={89}><Grip $w={11} /><Tools spec="cut copy paste" /></Bar>
          <Bar $w={63}><Grip $w={11} /><Tools spec="~addBox ~addGrid" /></Bar>
        </ToolRow>
        <ToolRow>
          <Bar $w={484}>
            <Grip $w={9} />
            <Combo $w={100} $off><ComboText $w={78} $tint="#f3f6fb"><Cell $w={20}><Icon name="tt" /></Cell> Default: A</ComboText><Chevron c="#a0a0a0" /></Combo>
            <Combo $w={50} $h={22} $off><ComboText $w={27} $tint="#f0f0f0">0</ComboText><Chevron c="#a0a0a0" /></Combo>
            <Cell $off><Glyph>B</Glyph></Cell><Cell $off><Glyph $italic>I</Glyph></Cell><Cell $off><Glyph $line>U</Glyph></Cell>
            <Cell $off><Glyph $size={14}>x<sup>2</sup></Glyph></Cell><Cell $off><Glyph $size={14}>x<sub>2</sub></Glyph></Cell><Cell $off><Glyph $size={14}>x<sup>2</sup></Glyph></Cell>
            <Cell $off><Glyph $size={16}>αβ</Glyph></Cell><Cell $off><Glyph $size={20}>A</Glyph></Cell><Cell $off><Glyph $size={14}>A</Glyph></Cell>
            <Tools spec="~left ~v ~spread ~v ~colorA ~v" />
          </Bar>
          <Bar $w={366}>
            <Grip $w={11} /><Tools spec="bucket v pen v" />
            <Combo $w={60}><ComboText $w={40}><Svg width="40" height="3"><path d="M2 1.500h32" stroke="#000" /></Svg></ComboText><Chevron /></Combo>
            <Combo $w={40} $h={22}>1.5<Chevron /></Combo>
            <Combo $w={60}><Svg width="34" height="14"><path d="M1.500.5h31v13h-31z" stroke="#000" fill="none" /></Svg><Chevron /></Combo>
            <Combo $w={40} $h={22}>1<Chevron /></Combo>
            <Tools spec="hatch v ~borders ~v" />
          </Bar>
        </ToolRow>
        <ToolRow>
          <Bar $w={461}><Grip $w={9} /><Tools spec="zoomIn zoomOut pageView | rescale | panel1 panel4 panel6 | axL axT axR axB inset insetR | bars3 legend colorScale clock table" /></Bar>
          <Bar $w={135}><Grip $w={11} /><Tools spec="~m1 ~m2 ~m3 ~m4 ~m5" /></Bar>
        </ToolRow>
        <Workspace>
          <Toolbox>
            <HGrip />
            {toolbox.map((t, i) => <ToolSlot key={t} $on={i === 0}><Icon name={t} />{flyouts.has(t) && <Flyout />}</ToolSlot>)}
          </Toolbox>
          <Side>
            <SideCaption />
            <Tree>
              <TreeItems>
                <TreeItem><FolderIcon /> UNTITLED</TreeItem>
                <TreeItem $in={7}><Svg width="9" height="12"><path d="M.5-4v11h9" stroke="#888" strokeDasharray="1 1" fill="none" /></Svg><FolderIcon open /> <Selected>Folder1</Selected></TreeItem>
              </TreeItems>
              <VScroll><Chevron dir="up" /><Chevron /></VScroll>
            </Tree>
            <List>
              <ListHead><Col $w={91}>Name</Col><Col $w={100}>Type</Col><Col $w={9} /><Col $w={29}>M...</Col><Col $w={13}>C</Col></ListHead>
              {listing.map(([n, t]) => (
                <ListRow key={n}><RowIcon>{t === 'Graph' ? <GraphIcon /> : <BookIcon />}</RowIcon><Col $w={75}>{n}</Col><Col $w={108}>{t}</Col><Col $w={30}>2...</Col><Col $w={8}>2</Col></ListRow>
              ))}
              <HScroll><Chevron dir="left" /><Thumb /><Chevron dir="right" /></HScroll>
            </List>
            <SideSplit />
            <SideCaption />
            <Memo><MemoScroll><Chevron dir="up" c="#b8b8b8" /></MemoScroll><HScroll><Chevron dir="left" c="#b0b0b0" /><Chevron dir="right" c="#b0b0b0" /></HScroll></Memo>
          </Side>
          <GraphArea>
            <Canvas><Chart /><LayerTabs><LayerTab>1</LayerTab><LayerTab $dim>2</LayerTab></LayerTabs></Canvas>
          </GraphArea>
        </Workspace>
        <BottomTools>
          <Bar $w={679} $closed>
            <Grip $w={15} /><Tools spec="line v scat v lscat v hist v area v box v surf v polar v contour v | ~slab ~v | ~wire ~v | ~slab ~v | ~slab ~v ~bars3d ~wire ~v ~mesh ~v ~image ~profile" />
          </Bar>
          <Bar $w={388} $closed><Grip $w={11} /><Tools spec="~alL ~alR | ~alT ~alB | ~alH ~alV | ~dV ~dH | front back | ~fit fitB | ~group ~ungroup" /></Bar>
        </BottomTools>
        <FindPane>
          <PaneEdge><TinyButton><CloseMark /></TinyButton><TinyButton><Svg width="4" height="5"><path d="M0 0v5l3-2.500z" fill={G} /></Svg></TinyButton><VGrip /></PaneEdge>
          <FindBody>
            <FindLine><span>Find:</span><FindInput /></FindLine>
            <Results><span>Category</span><span>Topic</span></Results>
          </FindBody>
        </FindPane>
        <Status>
          <StatusPart>For Help, press F1</StatusPart>
          <StatusPart $w={58}>AU : ON</StatusPart><StatusPart $w={117}>Color Publication</StatusPart><StatusPart $w={331}>2:[Book1]Sheet1!Col(C)[1:32]</StatusPart>
        </Status>
      </Window>
      <Notes width="1366" height="768">{arrows.map((a, i) => <Taper key={i} a={a} />)}</Notes>
      {notes.map(([t, x, y, c]) => <Note key={t} $x={x} $y={y} $c={c}>{t}</Note>)}
      <Shade />
      <UsbTab>
        <svg width="16" height="26" fill="none" stroke="#f5a623" strokeWidth="1.300"><path d="M3.500 8V1.500h9V8M1 8.500h14V20q0 4-4 4H5q-4 0-4-4z" /><path d="M6 4v2M10 4v2" /></svg>
      </UsbTab>
      <ImeBar>
        <svg width="138" height="25" fill="none" stroke="#1b6fc2" strokeWidth="2">
          <path d="M1 5L22 0q3 0 4 4l3 15q0 3-3 4L7 25q-3 0-4-3L0 8z" fill="#f4511e" stroke="none" /><path d="M21 6q-12-1-12 4c0 3 12 1 11 6-1 4-7 4-12 3" stroke="#fff" strokeWidth="3" />
          <text x="33" y="20" fill="#1b6fc2" stroke="none">英</text>
          <path d="M57 20h4v-2q-4-5-1-8 4-3 7 0 3 3-1 8v2h4" />
          <path d="M77 9h15v11H77zM79 12h11M79 14.500h11M81 17.500h7" strokeWidth="1.500" />
          <path d="M101 12a3.500 3.500 0 1 1 7 0 3.500 3.500 0 1 1-7 0M101 21q0-5 5-5h5v5z" fill="#1b6fc2" stroke="none" /><path d="M108 15h8v6h-8z" fill="#fff" strokeWidth="1.300" />
          <path d="M122 8h5v5h-5zM122 16h5v5h-5zM130 16h4v5h-4z" fill="#1b6fc2" strokeWidth="1" /><path d="M130.500 8.500h4v4h-4z" strokeWidth="1.500" />
        </svg>
      </ImeBar>
    </Screen>
  );
}
